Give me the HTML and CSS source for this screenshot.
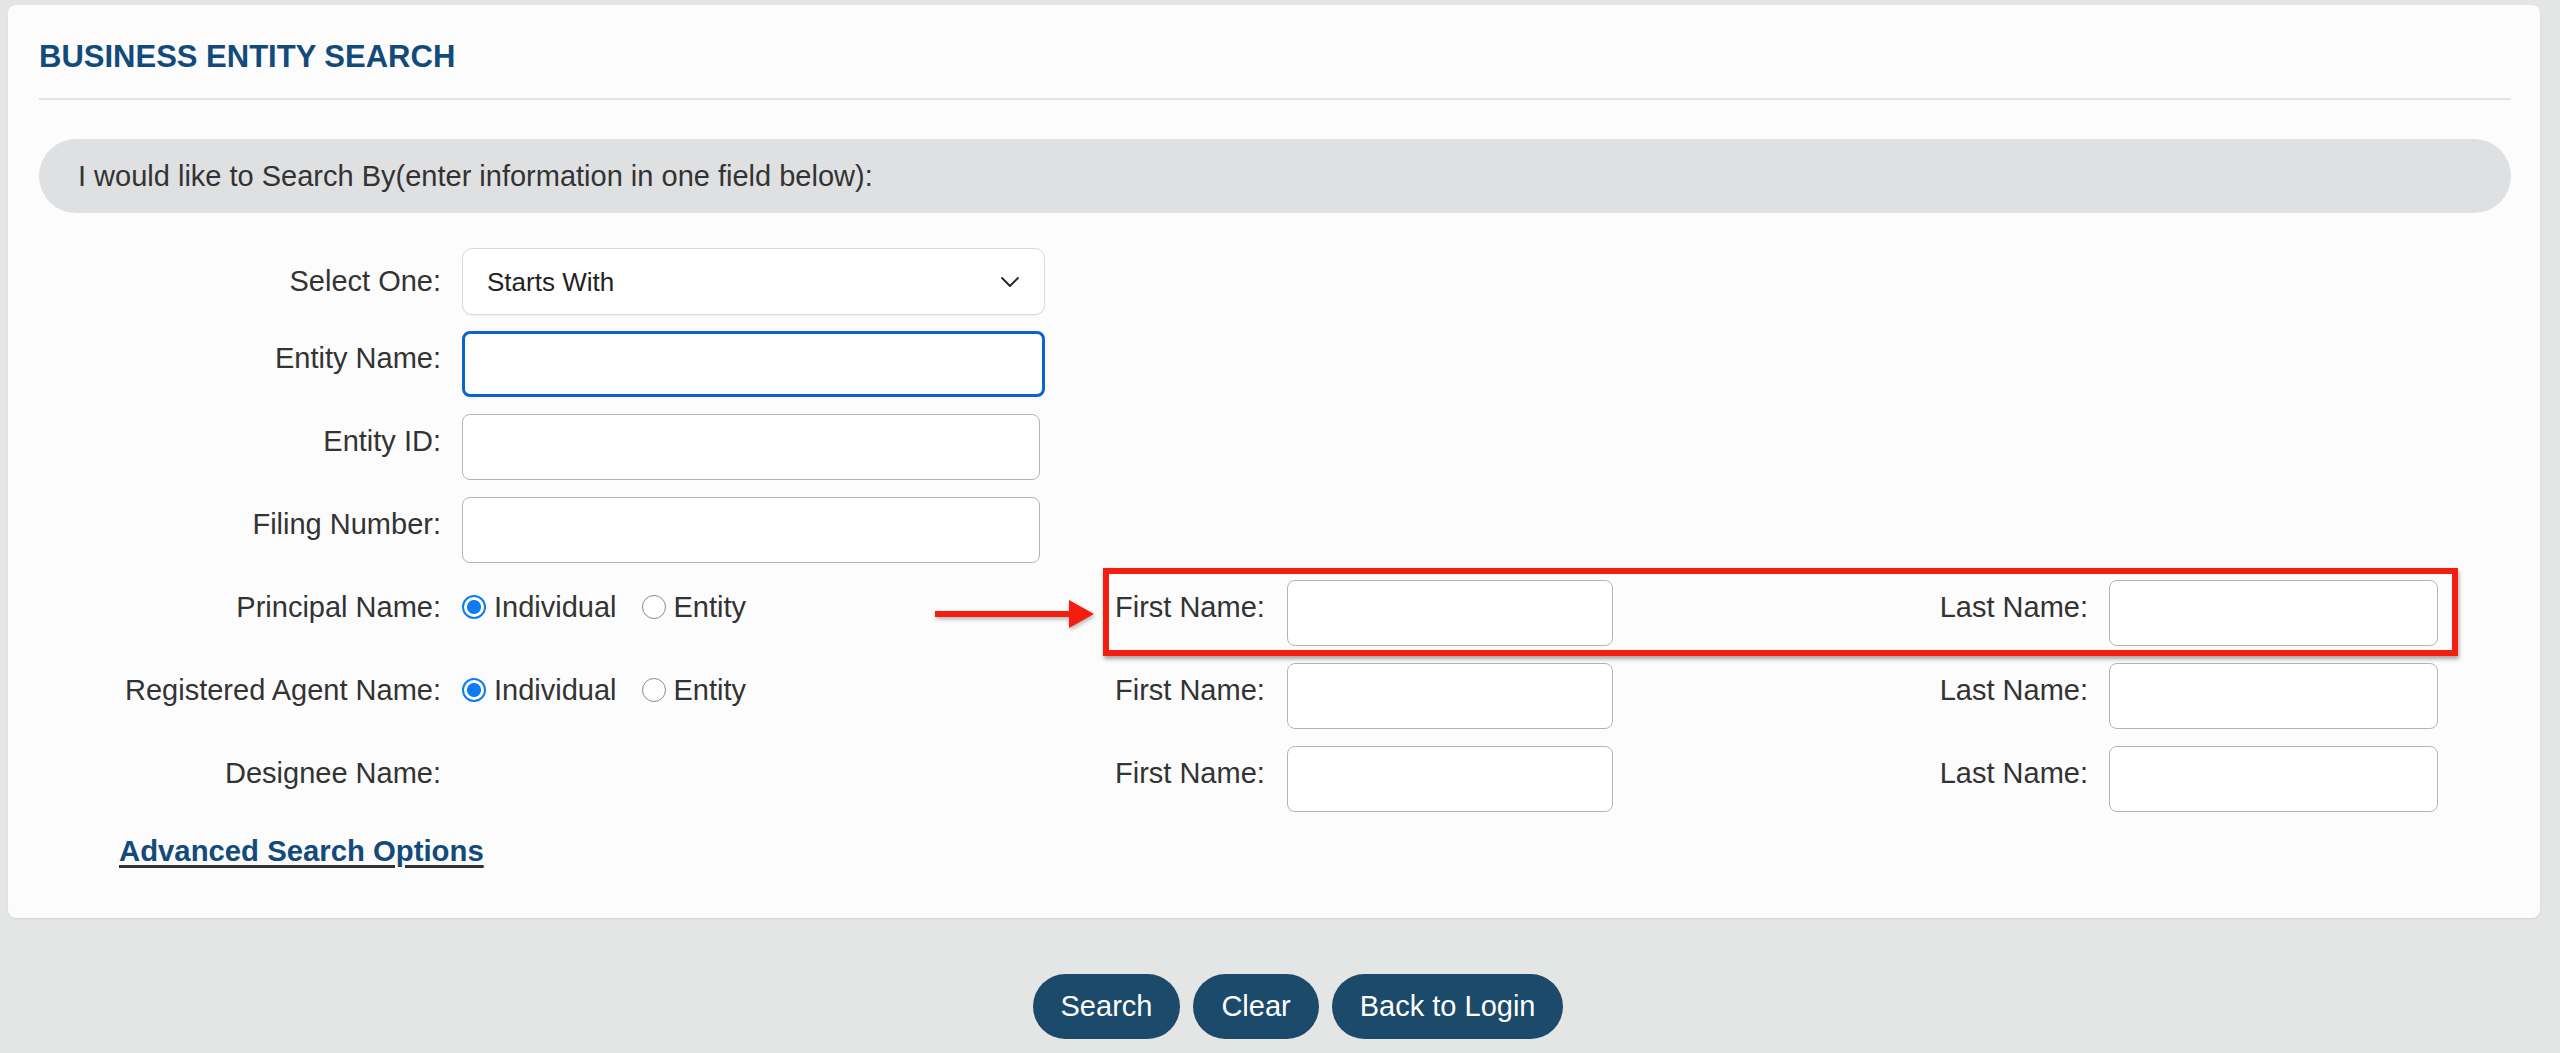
FILE: index.html
```html
<!DOCTYPE html>
<html lang="en">
<head>
  <meta charset="UTF-8" />
  <meta name="viewport" content="width=device-width, initial-scale=1.0" />
  <title>Business Entity Search</title>
  <link rel="stylesheet" href="styles.css">
</head>
<body>
<div class="card">
  <h1 class="title">BUSINESS ENTITY SEARCH</h1>
  <hr class="rule">
  <div class="search-by">I would like to Search By(enter information in one field below):</div>

  <div class="form">
    <label class="lbl mid" for="matchType">Select One:</label>
    <div class="ctl">
      <div class="select-wrap">
        <select id="matchType">
          <option selected>Starts With</option>
          <option>Contains</option>
          <option>Exact Match</option>
        </select>
        <svg class="chev" viewBox="0 0 18 10" width="18" height="10"><path d="M1 1l8 8 8-8" fill="none" stroke="#222" stroke-width="1.8" stroke-linecap="round" stroke-linejoin="round"/></svg>
      </div>
    </div>

    <label class="lbl" for="entityName">Entity Name:</label>
    <div class="ctl"><input type="text" id="entityName" class="txt focus"></div>

    <label class="lbl" for="entityId">Entity ID:</label>
    <div class="ctl"><input type="text" id="entityId" class="txt"></div>

    <label class="lbl" for="filingNo">Filing Number:</label>
    <div class="ctl"><input type="text" id="filingNo" class="txt"></div>

    <!-- principal -->
    <span class="lbl">Principal Name:</span>
    <div class="radios">
      <label><input type="radio" name="principal" checked> Individual</label>
      <label><input type="radio" name="principal"> Entity</label>
    </div>
    <label class="name-lbl">First Name:</label>
    <input type="text" class="txt">
    <label class="last-lbl">Last Name:</label>
    <input type="text" class="txt">

    <!-- registered agent -->
    <span class="lbl">Registered Agent Name:</span>
    <div class="radios">
      <label><input type="radio" name="agent" checked> Individual</label>
      <label><input type="radio" name="agent"> Entity</label>
    </div>
    <label class="name-lbl">First Name:</label>
    <input type="text" class="txt">
    <label class="last-lbl">Last Name:</label>
    <input type="text" class="txt">

    <!-- designee -->
    <span class="lbl">Designee Name:</span>
    <label class="name-lbl">First Name:</label>
    <input type="text" class="txt">
    <label class="last-lbl">Last Name:</label>
    <input type="text" class="txt">

    <!-- callout -->
    <div class="callout"></div>
    <svg class="arrow" viewBox="0 0 160 30" width="160" height="30">
      <rect x="0" y="12" width="138" height="6" fill="#f41e10"/>
      <polygon points="134,1 159,15 134,29" fill="#f41e10"/>
    </svg>
  </div>

  <a href="#" class="adv">Advanced Search Options</a>
</div>

<div class="actions">
  <button>Search</button>
  <button>Clear</button>
  <button>Back to Login</button>
</div>
</body>
</html>
```

FILE: styles.css
```css
* { box-sizing: border-box; }
html, body { margin: 0; padding: 0; }
body {
  background: #e4e6e5;
  font-family: "Liberation Sans", Arial, Helvetica, sans-serif;
  font-size: 29px;
  color: #333;
}

.card {
  margin: 5px 20px 0 8px;
  padding: 34px 29px 49px 31px;
  background: #fcfcfc;
  border-radius: 8px;
  box-shadow: 0 1px 2px rgba(0,0,0,.08);
}
.title {
  margin: 0;
  font-size: 31px; line-height: 36px;
  font-weight: bold;
  color: #124b7b;
}
.rule {
  margin: 23px 0 0;
  border: none;
  height: 2px;
  background: #e3e4e6;
}
.search-by {
  margin-top: 39px;
  height: 74px;
  padding-left: 39px;
  display: flex; align-items: center;
  background: #dfe0e2;
  border-radius: 37px;
}

/* search grid */
.form {
  position: relative;
  margin-top: 35px;
  display: grid;
  grid-template-columns: 423px 653px 172px 326px 496px 329px;
  grid-auto-rows: 66px;
  row-gap: 17px;
}
.lbl, .name-lbl, .last-lbl {
  align-self: start;
  margin-top: 9px;
  line-height: 36px;
}
.lbl {
  grid-column: 1;
  text-align: right;
  padding-right: 21px;
}
.lbl.mid { align-self: center; margin-top: 0; }
.ctl { grid-column: 2; }
.name-lbl { grid-column: 3; }
.last-lbl { grid-column: 5; text-align: right; padding-right: 21px; }

.txt {
  width: 100%; height: 66px;
  margin: 0;
  border: 1.5px solid #b4b4b4;
  border-radius: 8px;
  background: #fff;
  font: inherit;
  padding: 0 20px;
  outline: none;
}
.ctl .txt { width: 578px; }
.ctl .txt.focus {
  width: 583px;
  border: 3px solid #0b63ce;
}

.select-wrap {
  position: relative;
  width: 583px; height: 67px;
}
.select-wrap select {
  -webkit-appearance: none; appearance: none;
  width: 100%; height: 100%;
  border: 1.5px solid #d7dade;
  border-radius: 10px;
  background: #fff;
  font: inherit; font-size: 26px; color: #222;
  padding: 0 24px;
  box-shadow: 0 1px 1px rgba(0,0,0,.05);
}
.chev {
  position: absolute; right: 26px; top: 29px;
  pointer-events: none;
}

.radios {
  grid-column: 2;
  align-self: start;
  margin-top: 9px;
  height: 36px;
  display: flex; align-items: center; gap: 25px;
}
.radios label { display: flex; align-items: center; gap: 8px; }
.radios input {
  -webkit-appearance: none; appearance: none;
  margin: 0;
  width: 24px; height: 24px;
  border: 1.5px solid #8a8a8a;
  border-radius: 50%;
  background: #fff;
}
.radios input:checked {
  border: 2.5px solid #0d7bf2;
  background: radial-gradient(circle, #0d7bf2 0 6.5px, #fff 7.5px);
}

/* annotation over principal row */
.callout {
  position: absolute;
  left: 1064px; top: 320px;
  width: 1355px; height: 88px;
  border: 6px solid #f41e10;
  box-shadow: 1px 3px 4px rgba(0,0,0,.35);
  pointer-events: none;
}
.arrow {
  position: absolute;
  left: 896px; top: 351px;
  filter: drop-shadow(1px 2px 2px rgba(0,0,0,.3));
}

.adv {
  display: inline-block;
  margin: 21px 0 0 80px;
  font-size: 29.3px;
  line-height: 36px;
  font-weight: bold;
  color: #124b7b;
  text-decoration: underline;
  text-decoration-color: #333;
  text-decoration-thickness: 3px;
  text-underline-offset: 4px;
}

.actions {
  margin-top: 56px;
  padding-left: 36px;
  display: flex; justify-content: center; gap: 13px;
}
.actions button {
  height: 65px;
  padding: 0 28px;
  border: none;
  border-radius: 33px;
  background: #1b4a6b;
  color: #fff;
  font: inherit;
  cursor: pointer;
}
```
